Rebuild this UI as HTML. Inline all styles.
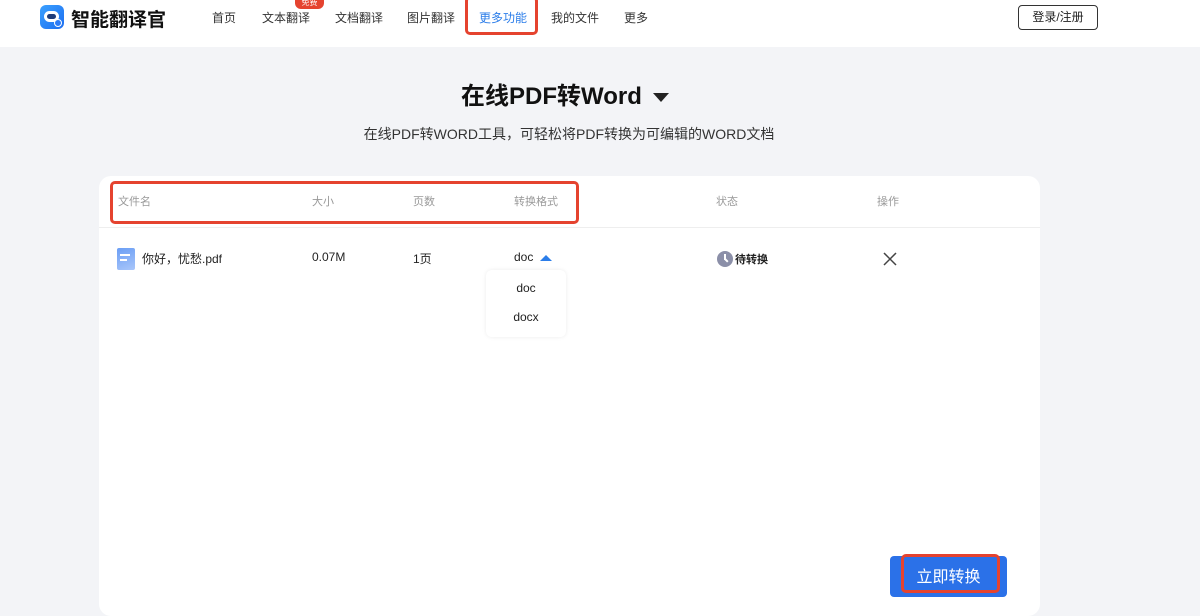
<!DOCTYPE html>
<html><head><meta charset="utf-8"><style>
*{margin:0;padding:0;box-sizing:border-box}
body{width:1200px;height:609px;overflow:hidden;background:#f3f4f7;font-family:"Liberation Sans","Noto Sans CJK SC",sans-serif;position:relative;color:#222}
.hdr{position:absolute;left:0;top:0;width:1200px;height:47px;background:#fff}
.a{position:absolute}
.nav{font-size:12px;color:#333;top:9px}
.red{border:3px solid #e5432f;border-radius:5px;position:absolute}
.card{position:absolute;left:99px;top:176px;width:941px;height:440px;background:#fff;border-radius:12px}
.th{font-size:11px;color:#999;top:193px}
.td{font-size:12px;color:#222;top:250px}
</style></head><body>
<div class="hdr">
 <div class="a" style="left:40px;top:5px;width:24px;height:24px;border-radius:6px;background:linear-gradient(135deg,#3aa0ff,#1d6ef0)">
  <div class="a" style="left:4px;top:6px;width:15px;height:11px;border-radius:6px;background:#fff"></div>
  <div class="a" style="left:7px;top:9px;width:9px;height:5px;border-radius:3px;background:#1f3c7a"></div>
  <div class="a" style="left:14px;top:14px;width:8px;height:8px;border-radius:50%;background:#2d7cf6;border:1px solid #fff"></div>
 </div>
 <div class="a" style="left:71px;top:5px;font-size:19px;font-weight:bold;color:#111">智能翻译官</div>
 <div class="a nav" style="left:212px">首页</div>
 <div class="a nav" style="left:262px">文本翻译</div>
 <div class="a" style="left:295px;top:-3px;width:29px;height:12px;background:#e5432f;border-radius:0 0 6px 6px;color:#fff;font-size:8px;text-align:center;line-height:12px">免费</div>
 <div class="a nav" style="left:335px">文档翻译</div>
 <div class="a nav" style="left:407px">图片翻译</div>
 <div class="a nav" style="left:479px;color:#2b7de9">更多功能</div>
 <div class="red" style="left:465px;top:-4px;width:73px;height:39px"></div>
 <div class="a nav" style="left:551px">我的文件</div>
 <div class="a nav" style="left:624px">更多</div>
 <div class="a" style="left:1018px;top:5px;width:80px;height:25px;border:1px solid #333;border-radius:4px;font-size:12px;text-align:center;line-height:23px">登录/注册</div>
</div>
<div class="a" style="left:461px;top:76px;font-size:24px;font-weight:bold;color:#111;white-space:nowrap">在线PDF转Word <span style="display:inline-block;width:0;height:0;border-left:8px solid transparent;border-right:8px solid transparent;border-top:9px solid #222;vertical-align:middle;margin-left:4px"></span></div>
<div class="a" style="left:0;width:1138px;top:124px;text-align:center;font-size:14px;color:#333">在线PDF转WORD工具，可轻松将PDF转换为可编辑的WORD文档</div>
<div class="card"></div>
<div class="a" style="left:99px;top:227px;width:941px;height:1px;background:#eee"></div>
<div class="a th" style="left:118px">文件名</div>
<div class="a th" style="left:312px">大小</div>
<div class="a th" style="left:413px">页数</div>
<div class="a th" style="left:514px">转换格式</div>
<div class="a th" style="left:716px">状态</div>
<div class="a th" style="left:877px">操作</div>
<div class="red" style="left:110px;top:181px;width:469px;height:43px"></div>
<div class="a" style="left:117px;top:248px;width:18px;height:22px;border-radius:2px;background:linear-gradient(160deg,#6b9ef5,#a9c6fa)"><div class="a" style="left:3px;top:6px;width:10px;height:2px;background:#fff"></div><div class="a" style="left:3px;top:11px;width:7px;height:2px;background:#fff"></div></div>
<div class="a td" style="left:142px">你好，忧愁.pdf</div>
<div class="a td" style="left:312px">0.07M</div>
<div class="a td" style="left:413px">1页</div>
<div class="a td" style="left:514px">doc</div>
<div class="a" style="left:540px;top:255px;width:0;height:0;border-left:6px solid transparent;border-right:6px solid transparent;border-bottom:6px solid #2b7de9"></div>
<div class="a" style="left:486px;top:270px;width:80px;height:67px;background:#fff;border-radius:6px;box-shadow:0 0 4px rgba(0,0,0,.08)"></div>
<div class="a td" style="left:486px;width:80px;text-align:center;top:281px">doc</div>
<div class="a td" style="left:486px;width:80px;text-align:center;top:310px">docx</div>
<div class="a" style="left:717px;top:251px;width:16px;height:16px;border-radius:50%;background:#8b8fa8"><div class="a" style="left:7px;top:3px;width:2px;height:6px;background:#fff"></div><div class="a" style="left:7px;top:8px;width:2px;height:4px;background:#fff;transform:rotate(-45deg);transform-origin:top"></div></div>
<div class="a td" style="left:735px;font-weight:bold;font-size:11px;top:251px">待转换</div>
<svg class="a" style="left:883px;top:252px" width="14" height="14"><path d="M1 1L13 13M13 1L1 13" stroke="#444" stroke-width="1.5"/></svg>
<div class="a" style="left:890px;top:556px;width:117px;height:41px;background:#2b71e8;border-radius:4px;color:#fff;font-size:16px;text-align:center;line-height:43px">立即转换</div>
<div class="red" style="left:901px;top:554px;width:99px;height:39px"></div>
</body></html>
